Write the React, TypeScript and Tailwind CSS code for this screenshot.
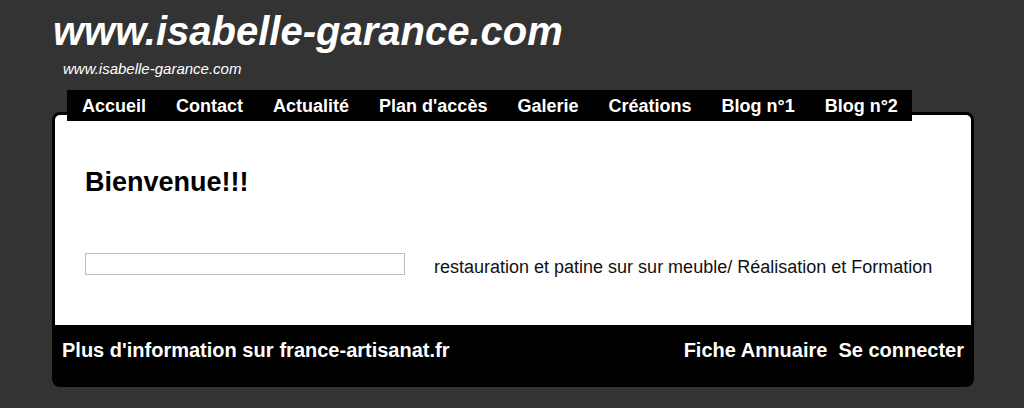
export default function App() {
  const nav = ["Accueil", "Contact", "Actualité", "Plan d'accès", "Galerie", "Créations", "Blog n°1", "Blog n°2"];
  return (
    <div className="h-[408px] w-[1024px] overflow-hidden bg-[#333333] font-['Liberation_Sans',Arial,sans-serif]">
      <div className="pl-[53px] pt-[7px]">
        <h1 className="text-[40px] font-bold italic leading-[48px] text-white">www.isabelle-garance.com</h1>
        <p className="ml-[10px] mt-[5px] text-[15px] italic leading-[18px] text-white">www.isabelle-garance.com</p>
      </div>
      {/* nav sits over the top of the card */}
      <nav className="relative z-10 ml-[67px] mt-[12px] flex h-[31px] w-[845px] items-center whitespace-nowrap bg-black pl-[15px]">
        {nav.map((n) => (
          <span key={n} className="mr-[30px] mt-[2px] shrink-0 text-[18px] font-bold leading-[31px] text-white">
            {n}
          </span>
        ))}
      </nav>
      <div className="ml-[52px] mt-[-9px] w-[922px] overflow-hidden rounded-[8px] border-[3px] border-black">
        <div className="h-[210px] bg-white pl-[30px] pt-[51px]">
          <h2 className="text-[27px] font-bold leading-[32px] text-black">Bienvenue!!!</h2>
          <div className="mt-[51px] flex items-center">
            <div className="h-[22px] w-[320px] border border-[#bdbdbd] bg-white" />
            <p className="ml-[29px] mt-[7px] text-[18px] leading-[22px] text-[#111]">
              restauration et patine sur sur meuble/ Réalisation et Formation
            </p>
          </div>
        </div>
        <div className="flex h-[59px] items-start justify-between bg-black px-[7px] pt-[13px] text-[20px] font-bold leading-[24px] text-white">
          <div className="flex gap-[6px]">
            <span>Plus d'information sur</span>
            <span>france-artisanat.fr</span>
          </div>
          <div className="flex gap-[11px]">
            <span>Fiche Annuaire</span>
            <span>Se connecter</span>
          </div>
        </div>
      </div>
    </div>
  );
}
